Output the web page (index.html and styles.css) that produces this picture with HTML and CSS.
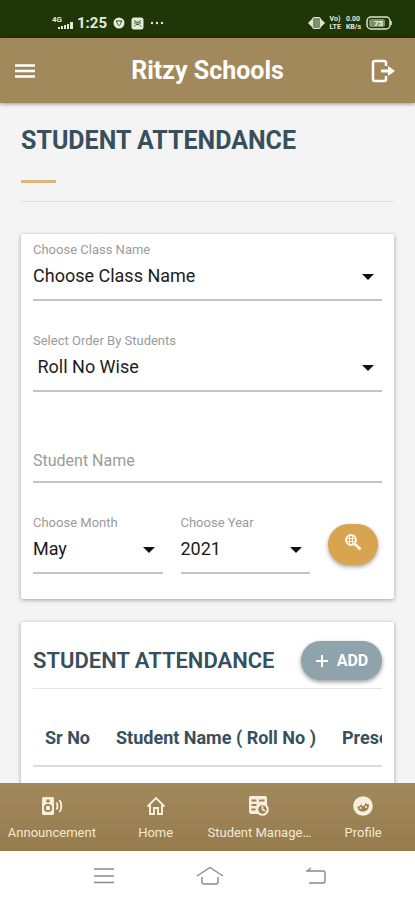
FILE: index.html
```html
<!DOCTYPE html>
<html lang="en">
<head>
    <meta charset="UTF-8">
    <meta name="viewport" content="width=device-width, initial-scale=1.0">
    <title>Ritzy Schools</title>
    <link rel="stylesheet" href="styles.css">
</head>
<body>
    <div class="status-bar">
        <div class="status-left">
            <svg width="22" height="16" viewBox="0 0 22 16" fill="#e4ecd9">
                <text x="0" y="7" class="tiny-text">4G</text>
                <path d="M6 12h2v2H6zM9 11h2v3H9zM12 10h2v4h-2zM15 9h2v5h-2zM18 7h3v7h-3z"/>
            </svg>
            <span class="clock">1:25</span>
            <svg width="12" height="12" viewBox="0 0 12 12">
                <circle cx="6" cy="6" r="5.5" fill="#e4ecd9"/>
                <path d="M3 4h6M3.5 4.5l2 4M8.5 4.5l-2 4" stroke="#1f3606" fill="none"/>
                <circle cx="6" cy="6" r="1.5" fill="#e4ecd9"/>
            </svg>
            <svg width="13" height="13" viewBox="0 0 13 13">
                <rect x="0.5" y="0.5" width="12" height="12" rx="2.5" fill="#e4ecd9"/>
                <path d="M3 3.5l3.5 2 3.5-2M3 6h7M3 9.5l2-2h3l2 2" stroke="#4a5e35" fill="none"/>
            </svg>
            <svg width="15" height="4" viewBox="0 0 15 4" fill="#e4ecd9">
                <circle cx="2" cy="2" r="1.2"/>
                <circle cx="7" cy="2" r="1.2"/>
                <circle cx="12" cy="2" r="1.2"/>
            </svg>
        </div>
        <div class="status-right">
            <svg width="17" height="14" viewBox="0 0 17 14">
                <path d="M0 7l4-4v8zM17 7l-4-4v8z" fill="#dbe5cf"/>
                <rect x="4.5" y="1.5" width="8" height="11" rx="1.5" fill="#7f9169" stroke="#dbe5cf"/>
            </svg>
            <span class="network">Vo)<br>LTE</span>
            <span class="network">0.00<br>KB/s</span>
            <svg width="27" height="14" viewBox="0 0 27 14">
                <rect x="1" y="1" width="23" height="12" rx="4" fill="none" stroke="#dbe5cf" stroke-width="1.5"/>
                <rect x="3" y="3" width="16" height="8" rx="2" fill="#7f9169"/>
                <path d="M25 5v4" stroke="#dbe5cf" stroke-width="1.5"/>
                <text x="8" y="10" class="tiny-text" fill="#f4f8ee">75</text>
            </svg>
        </div>
    </div>

    <header class="app-header">
        <button class="icon-btn" aria-label="Open menu">
            <svg width="22" height="16" viewBox="0 0 22 16" stroke="#fff" stroke-width="2.4">
                <path d="M1 2.5h20M1 8h20M1 13.5h20"/>
            </svg>
        </button>
        <h1>Ritzy Schools</h1>
        <button class="icon-btn" aria-label="Log out">
            <svg width="24" height="24" viewBox="0 0 24 24" fill="none" stroke="#fff" stroke-width="2.5">
                <path d="M15 7V4q0-2-2-2H4Q2 2 2 4v16q0 2 2 2h9q2 0 2-2v-3"/>
                <path d="M10 12h9" stroke-width="3"/>
                <path d="M17 7l7 5-7 5z" fill="#fff" stroke="none"/>
            </svg>
        </button>
    </header>

    <main class="content">
        <h2 class="page-title">Student Attendance</h2>
        <hr class="divider">

        <form class="card search-card">
            <div class="field">
                <label for="class-name">Choose Class Name</label>
                <select id="class-name">
                    <option>Choose Class Name</option>
                </select>
            </div>
            <div class="field">
                <label for="order-by">Select Order By Students</label>
                <select id="order-by">
                    <option>&nbsp;Roll No Wise</option>
                </select>
            </div>
            <div class="field name-field">
                <input type="text" id="student-name" placeholder="Student Name" aria-label="Student Name">
            </div>
            <div class="field-row">
                <div class="field">
                    <label for="month">Choose Month</label>
                    <select id="month">
                        <option>May</option>
                    </select>
                </div>
                <div class="field">
                    <label for="year">Choose Year</label>
                    <select id="year">
                        <option>2021</option>
                    </select>
                </div>
                <button type="button" class="search-btn" aria-label="Search">
                    <svg width="18" height="18" viewBox="0 0 18 18" fill="none" stroke="#fff8e8">
                        <circle cx="7" cy="7" r="5" stroke-width="1.8"/>
                        <path d="M5.5 2.5v9M8.5 2.5v9M2.5 5.5h9M2.5 8.5h9" stroke-width="1"/>
                        <path d="M11 11l5.5 5.5" stroke-width="2.6"/>
                    </svg>
                </button>
            </div>
        </form>

        <section class="card list-card">
            <div class="list-header">
                <h3>Student Attendance</h3>
                <button type="button" class="add-btn">
                    <svg width="14" height="14" viewBox="0 0 14 14" stroke="#fff" stroke-width="2">
                        <path d="M7 1v12M1 7h12"/>
                    </svg>
                    ADD
                </button>
            </div>
            <div class="table-wrap">
                <table>
                    <thead>
                        <tr>
                            <th>Sr No</th>
                            <th>Student Name ( Roll No )</th>
                            <th>Present</th>
                        </tr>
                    </thead>
                </table>
            </div>
        </section>
    </main>

    <nav class="tab-bar">
        <a href="#announcement">
            <svg width="24" height="20" viewBox="0 0 24 20" fill="none" stroke="#f7efdc">
                <rect x="2" y="1" width="12" height="18" rx="1.5" fill="#f7efdc" stroke="none"/>
                <circle cx="8" cy="5" r="1.7" fill="#9c8153" stroke="none"/>
                <circle cx="8" cy="12" r="3.2" stroke="#9c8153" stroke-width="1.8"/>
                <path d="M16.5 6.5q2 3.5 0 7M19.5 4q3.8 6 0 12" stroke-width="1.8"/>
            </svg>
            <span>Announcement</span>
        </a>
        <a href="#home">
            <svg width="20" height="20" viewBox="0 0 20 20" fill="none" stroke="#f7efdc" stroke-width="1.9">
                <path d="M1.5 10.5L10 2l8.5 8.5M4 9v9h4v-6h4v6h4V9"/>
            </svg>
            <span>Home</span>
        </a>
        <a href="#student">
            <svg width="20" height="20" viewBox="0 0 20 20">
                <rect x="0" y="0" width="18" height="18" rx="2" fill="#f7efdc"/>
                <path d="M2.5 4.5h5M10 4.5h5.5M2.5 9h5M10 9h3M2.5 13.5h4" stroke="#9c8153" stroke-width="1.8"/>
                <circle cx="13.5" cy="13.5" r="6.3" fill="#f7efdc"/>
                <circle cx="13.5" cy="13.5" r="4.2" fill="#9c8153"/>
                <path d="M13.5 10v3.5l2.5 1.5" fill="none" stroke="#f7efdc" stroke-width="1.6"/>
            </svg>
            <span>Student Management</span>
        </a>
        <a href="#profile">
            <svg width="20" height="20" viewBox="0 0 20 20">
                <circle cx="10" cy="10" r="9.8" fill="#f7efdc"/>
                <path d="M4.5 10.5q3 0 4.5-3v3l3-1.5V7q2.5 1.5 4 1.5c0 5-2.5 7-6 7s-5.5-2-5.5-5z" fill="#9c8153"/>
                <circle cx="7.5" cy="12" r="1" fill="#f7efdc"/>
                <circle cx="13" cy="11" r="1.1" fill="#f7efdc"/>
            </svg>
            <span>Profile</span>
        </a>
    </nav>

    <div class="system-nav">
        <button aria-label="Recent apps">
            <svg width="20" height="18" viewBox="0 0 20 18" stroke="#8a8a8a" stroke-width="1.5">
                <path d="M0 2h20M0 9h20M0 15.5h20"/>
            </svg>
        </button>
        <button aria-label="Home screen">
            <svg width="28" height="20" viewBox="0 0 28 20" fill="none" stroke="#8a8a8a" stroke-width="1.4">
                <path d="M1 10L14 1.5 27 10M6 11v5q0 2 2 2h12q2 0 2-2v-5"/>
            </svg>
        </button>
        <button aria-label="Back">
            <svg width="20" height="18" viewBox="0 0 20 18" fill="none" stroke="#8a8a8a" stroke-width="1.4">
                <path d="M5 1L1 4h16q2 0 2 2v8q0 2-2 2H3"/>
            </svg>
        </button>
    </div>
</body>
</html>
```

FILE: styles.css
```css
* {
    box-sizing: border-box;
}

body {
    font-family: Roboto, sans-serif;
    background-color: #f4f4f4;
    margin: 0;
    display: flex;
    flex-direction: column;
    height: 100vh;
}

h1, h2, h3 {
    margin: 0;
}

button {
    font-family: inherit;
    border: none;
    background: none;
    padding: 0;
    cursor: pointer;
}

svg {
    display: block;
    flex-shrink: 0;
}

/* phone status bar */
.status-bar {
    display: flex;
    justify-content: space-between;
    background-color: #1f3606;
    color: #e4ecd9;
    height: 38px;
    padding: 8px 22px 0 52px;
}

.status-left, .status-right {
    display: flex;
    align-items: center;
    gap: 6px;
}

.status-right {
    gap: 5px;
}

.clock {
    font-size: 15px;
    font-weight: 700;
    margin-left: -3px;
}

.network {
    font-size: 7px;
    font-weight: 700;
    line-height: 8px;
}

.tiny-text {
    font-size: 8px;
    font-weight: 700;
}

/* app header */
.app-header {
    display: flex;
    justify-content: space-between;
    align-items: center;
    height: 65px;
    padding: 0 20px 0 14px;
    background-color: #a1895b;
    color: #fff;
    box-shadow: 0 1px 4px rgba(0, 0, 0, 0.4);
    z-index: 1;
}

.app-header h1 {
    padding-left: 8px;
    font-size: 25px;
    font-weight: 700;
}

.content {
    flex: 1;
    min-height: 0;
    overflow: hidden;
    padding: 22px 21px 0;
}

.page-title {
    color: #37505c;
    font-size: 25px;
    font-weight: 700;
    line-height: 32px;
    text-transform: uppercase;
}

.page-title::after {
    content: "";
    display: block;
    width: 35px;
    height: 3px;
    margin-top: 23px;
    background-color: #dcb67a;
}

.divider {
    border: none;
    border-top: 1px solid #dedede;
    margin: 18px 0 32px;
}

.card {
    background: #fff;
    padding: 0 12px;
    margin-bottom: 23px;
    border-radius: 2px;
    box-shadow: 0 1px 4px rgba(0, 0, 0, 0.35);
}

/* search form */
.search-card {
    padding-top: 8px;
    padding-bottom: 25px;
}

.field {
    margin-bottom: 32px;
}

.field label {
    display: block;
    color: #9b9b9b;
    font-size: 13px;
    line-height: 16px;
}

.field select, .field input {
    display: block;
    width: 100%;
    height: 43px;
    border: none;
    border-bottom: 2px solid #c4c4c4;
    border-radius: 0;
    padding: 0 0 6px;
    background-color: transparent;
    color: #1c1c1c;
    font-family: inherit;
    font-size: 18px;
    outline: none;
}

.field select {
    appearance: none;
    background-image: url("data:image/svg+xml,%3Csvg xmlns='http://www.w3.org/2000/svg' width='12' height='6'%3E%3Cpath d='M0 0h12L6 6z' fill='%23111'/%3E%3C/svg%3E");
    background-repeat: no-repeat;
    background-position: right 8px top 16px;
}

.name-field {
    padding-top: 16px;
}

.field input {
    font-size: 16px;
    padding-bottom: 0;
}

.field input::placeholder {
    color: #9b9b9b;
    opacity: 1;
}

.field-row {
    display: flex;
    align-items: flex-start;
    gap: 18px;
}

.field-row .field {
    flex: 1;
    margin-bottom: 0;
}

.search-btn {
    display: flex;
    justify-content: center;
    width: 50px;
    height: 41px;
    margin: 9px 4px 0 0;
    padding-top: 9px;
    border-radius: 21px;
    background-color: #d7a450;
    box-shadow: 0 2px 4px rgba(0, 0, 0, 0.35);
}

/* attendance list */
.list-card {
    padding-top: 19px;
    padding-bottom: 40px;
}

.list-header {
    display: flex;
    justify-content: space-between;
    align-items: center;
    padding-bottom: 8px;
    border-bottom: 1px solid #e4e4e4;
}

.list-header h3 {
    color: #37505c;
    font-size: 22px;
    font-weight: 600;
    text-transform: uppercase;
}

.add-btn {
    display: flex;
    align-items: center;
    justify-content: center;
    gap: 8px;
    width: 81px;
    height: 39px;
    border-radius: 20px;
    background-color: #8ea3ac;
    color: #fff;
    font-size: 16px;
    font-weight: 700;
    box-shadow: 0 2px 4px rgba(0, 0, 0, 0.4);
}

.table-wrap {
    overflow: hidden;
    margin-top: 22px;
}

table {
    border-collapse: collapse;
}

th {
    padding: 16px 14px 16px 12px;
    border-bottom: 2px solid #dcdcdc;
    color: #37505c;
    font-size: 18px;
    font-weight: 700;
    line-height: 22px;
    text-align: left;
    white-space: nowrap;
}

/* bottom tabs */
.tab-bar {
    display: grid;
    grid-template-columns: repeat(4, 1fr);
    height: 68px;
    background: linear-gradient(#a1895b, #967b4d);
}

.tab-bar a {
    display: flex;
    flex-direction: column;
    align-items: center;
    gap: 9px;
    min-width: 0;
    padding-top: 13px;
    color: #f3e9d4;
    font-size: 13px;
    line-height: 16px;
    text-decoration: none;
}

.tab-bar span {
    max-width: 100%;
    overflow: hidden;
    text-overflow: ellipsis;
    white-space: nowrap;
}

.system-nav {
    display: flex;
    justify-content: space-between;
    align-items: center;
    height: 49px;
    padding: 0 89px 0 94px;
    background-color: #fff;
}
```
